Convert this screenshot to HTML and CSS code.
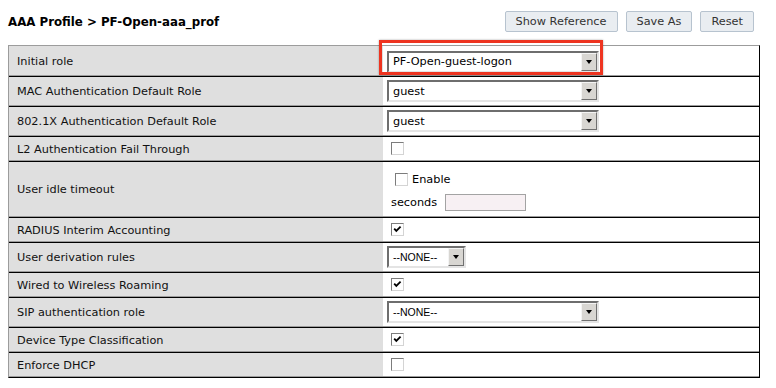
FILE: index.html
```html
<!DOCTYPE html>
<html>
<head>
<meta charset="utf-8">
<link rel="stylesheet" href="styles.css">
</head>
<body>
<div class="page">
  <div class="header">
    <div class="title">AAA Profile &gt; PF-Open-aaa_prof</div>
    <div class="actions">
      <button class="btn">Show Reference</button>
      <button class="btn">Save As</button>
      <button class="btn">Reset</button>
    </div>
  </div>

  <div class="grid">
    <div class="row h30">
      <div class="label">Initial role</div>
      <div class="value">
        <div class="select wide"><span class="sel-text">PF-Open-guest-logon</span><span class="arrow"><i></i></span></div>
      </div>
    </div>
    <div class="row h30">
      <div class="label">MAC Authentication Default Role</div>
      <div class="value">
        <div class="select wide"><span class="sel-text">guest</span><span class="arrow"><i></i></span></div>
      </div>
    </div>
    <div class="row h30">
      <div class="label">802.1X Authentication Default Role</div>
      <div class="value">
        <div class="select wide"><span class="sel-text">guest</span><span class="arrow"><i></i></span></div>
      </div>
    </div>
    <div class="row h25">
      <div class="label">L2 Authentication Fail Through</div>
      <div class="value"><span class="cb"></span></div>
    </div>
    <div class="row h56">
      <div class="label">User idle timeout</div>
      <div class="value stack">
        <div class="enable"><span class="cb"></span><span class="enable-text">Enable</span></div>
        <div class="secs"><span>seconds</span><span class="textbox"></span></div>
      </div>
    </div>
    <div class="row h25">
      <div class="label">RADIUS Interim Accounting</div>
      <div class="value"><span class="cb"><svg viewBox="0 0 11 11" width="11" height="11"><path d="M2.2 4.6 L4.3 6.9 L8.6 2.6" fill="none" stroke="#000" stroke-width="1.8"/></svg></span></div>
    </div>
    <div class="row h30">
      <div class="label">User derivation rules</div>
      <div class="value">
        <div class="select narrow"><span class="sel-text arial">--NONE--</span><span class="arrow"><i></i></span></div>
      </div>
    </div>
    <div class="row h25">
      <div class="label">Wired to Wireless Roaming</div>
      <div class="value"><span class="cb"><svg viewBox="0 0 11 11" width="11" height="11"><path d="M2.2 4.6 L4.3 6.9 L8.6 2.6" fill="none" stroke="#000" stroke-width="1.8"/></svg></span></div>
    </div>
    <div class="row h30">
      <div class="label">SIP authentication role</div>
      <div class="value">
        <div class="select wide"><span class="sel-text arial">--NONE--</span><span class="arrow"><i></i></span></div>
      </div>
    </div>
    <div class="row h25">
      <div class="label">Device Type Classification</div>
      <div class="value"><span class="cb"><svg viewBox="0 0 11 11" width="11" height="11"><path d="M2.2 4.6 L4.3 6.9 L8.6 2.6" fill="none" stroke="#000" stroke-width="1.8"/></svg></span></div>
    </div>
    <div class="row h25">
      <div class="label">Enforce DHCP</div>
      <div class="value"><span class="cb"></span></div>
    </div>
  </div>

  <div class="highlight"></div>
</div>
</body>
</html>
```

FILE: styles.css
```css
html, body {
  margin: 0;
  padding: 0;
  background: #fff;
}
body {
  padding: 8px;
  font-family: "DejaVu Sans", Verdana, sans-serif;
  font-size: 11.3px;
  color: #000;
}
.page {
  position: relative;
  width: 752px;
}
.header {
  display: flex;
  align-items: center;
  justify-content: space-between;
  height: 27px;
  padding-right: 6px;
  margin-bottom: 10px;
}
.title {
  font-weight: bold;
  font-size: 11.8px;
  padding-top: 1px;
}
.actions {
  display: flex;
  gap: 8px;
}
.btn {
  font-family: "DejaVu Sans", Verdana, sans-serif;
  font-size: 11.3px;
  color: #333;
  height: 21px;
  padding: 0 10px;
  background: #e9edf1;
  border: 1px solid #b7c3cf;
  border-radius: 2px;
  margin: 0;
}
.grid {
  border-top: 1px solid #9c9c9c;
  border-bottom: 1px solid #000;
  border-left: 1px solid #9c9c9c;
  border-right: 1px solid #000;
}
.row {
  display: flex;
  box-sizing: border-box;
  border-bottom: 1px solid #9c9c9c;
}
.row + .row {
  border-top: 1px solid #000;
}
.h30 { height: 30px; }
.h25 { height: 25px; }
.h56 { height: 56px; }
.row:first-child { height: 30px; }
.label {
  width: 374px;
  flex: none;
  background: #dfdfdf;
  display: flex;
  align-items: center;
  padding-left: 8px;
  padding-top: 1px;
  box-sizing: border-box;
  color: #111;
}
.row:first-child .label { padding-top: 2px; }
.value {
  flex: 1;
  display: flex;
  align-items: center;
  padding-left: 4px;
  background: #fff;
}
.row:first-child .value { padding-top: 2px; }
.select {
  box-sizing: border-box;
  height: 22px;
  display: flex;
  align-items: stretch;
  border: 2px solid;
  border-color: #6e6e6e #e4e4e4 #e4e4e4 #6e6e6e;
  background: #fff;
}
.select.wide { width: 212px; }
.select.narrow { width: 79px; }
.sel-text {
  flex: 1;
  display: flex;
  align-items: center;
  padding-left: 4px;
  font-size: 11.3px;
  color: #000;
  white-space: nowrap;
  overflow: hidden;
}
.sel-text.arial {
  font-family: "Liberation Sans", Arial, sans-serif;
  font-size: 10.5px;
}
.arrow {
  width: 16px;
  flex: none;
  box-sizing: border-box;
  background: #d8d6d2;
  border: 1px solid;
  border-color: #f4f4f4 #707070 #707070 #f4f4f4;
  display: flex;
  align-items: center;
  justify-content: center;
}
.arrow i {
  display: block;
  width: 0;
  height: 0;
  border-left: 3.5px solid transparent;
  border-right: 3.5px solid transparent;
  border-top: 4px solid #000;
}
.cb {
  box-sizing: border-box;
  width: 13px;
  height: 13px;
  margin-left: 4px;
  border: 1px solid;
  border-color: #7c7c7c #d4d4d4 #d4d4d4 #7c7c7c;
  background: #fff;
  display: inline-flex;
  align-items: center;
  justify-content: center;
}
.cb svg { display: block; }
.stack {
  flex-direction: column;
  align-items: flex-start;
  justify-content: center;
  gap: 8px;
  padding-top: 5px;
}
.enable {
  display: flex;
  align-items: center;
  padding-left: 4px;
}
.enable-text { margin-left: 4px; }
.secs {
  display: flex;
  align-items: center;
  padding-left: 4px;
  gap: 8px;
}
.textbox {
  display: block;
  width: 81px;
  height: 17px;
  box-sizing: border-box;
  border: 1px solid #a3a3a3;
  background: #f7f0f3;
}
.highlight {
  position: absolute;
  left: 371px;
  top: 32px;
  width: 224px;
  height: 35px;
  box-sizing: border-box;
  border: 3px solid #ee3420;
  box-shadow: 0 0 2px rgba(0, 0, 0, 0.35);
}
```
